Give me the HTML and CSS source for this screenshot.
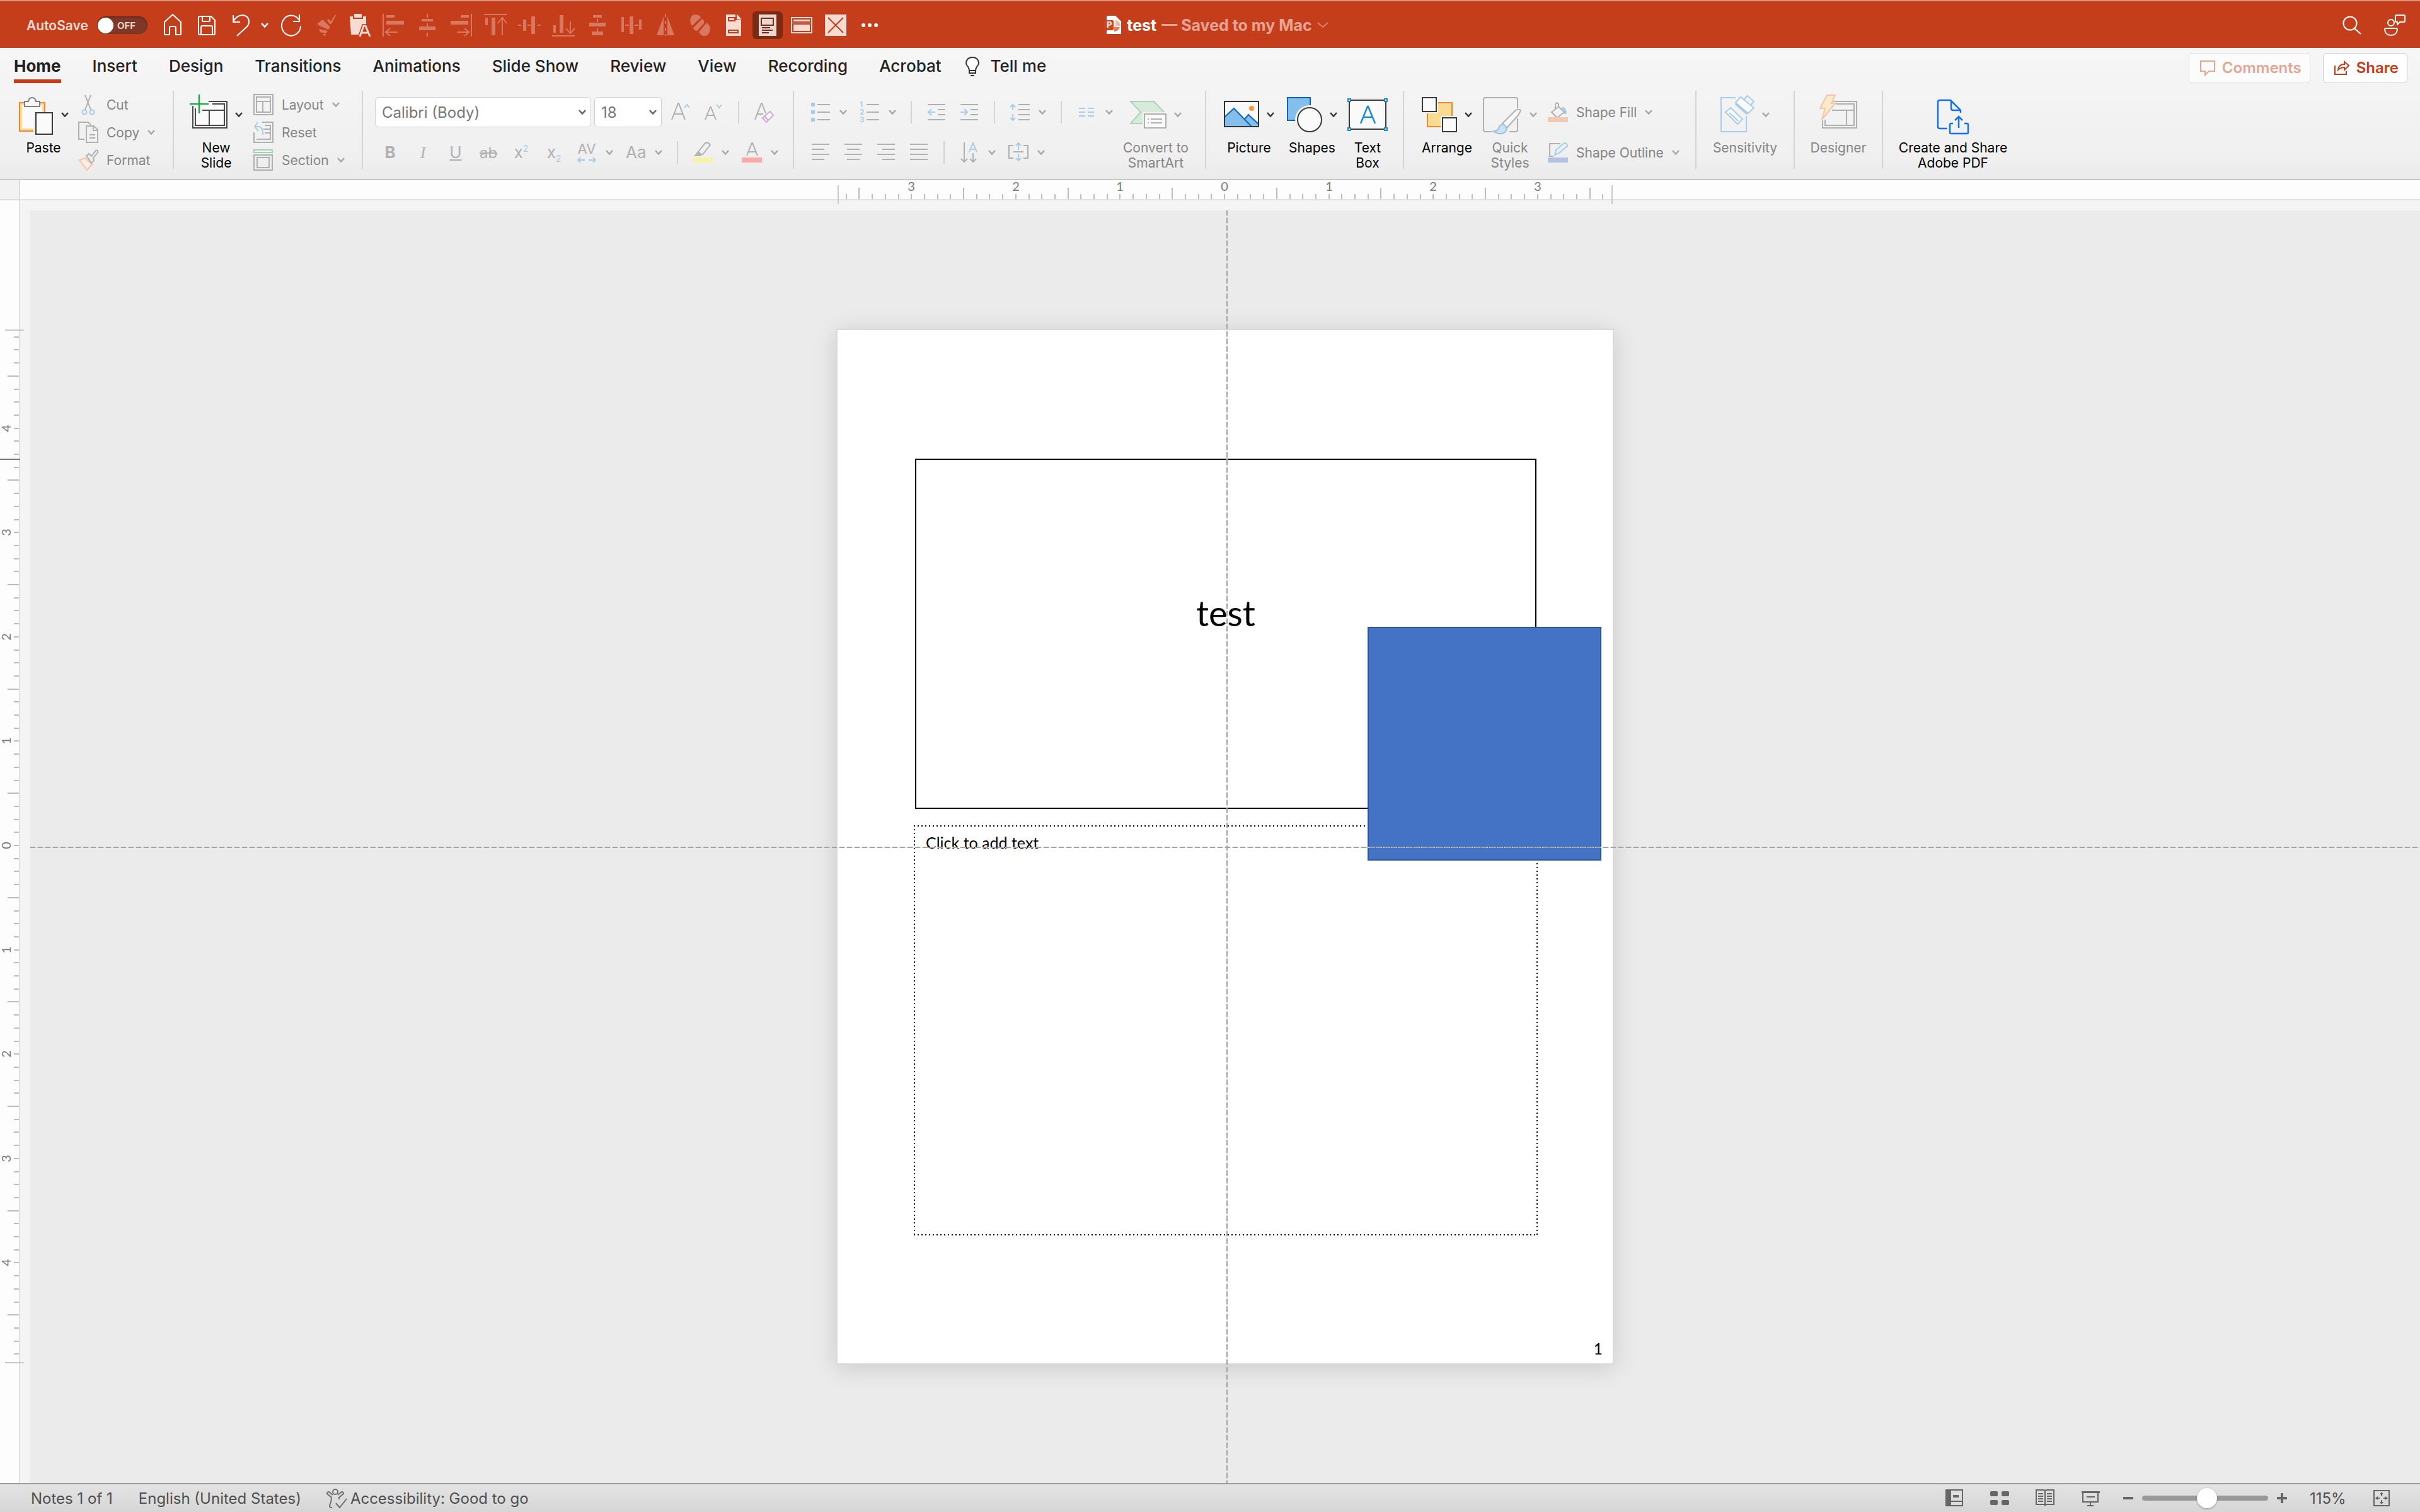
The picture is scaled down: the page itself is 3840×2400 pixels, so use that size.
FILE: index.html
```html
<!DOCTYPE html>
<html lang="en">
<head>
  <meta charset="UTF-8"/>
  <title>test</title>
  <link rel="stylesheet" href="styles.css">
</head>
<body>

<svg class="defs" aria-hidden="true">
  <symbol id="caret" viewBox="0 0 12 8"><path d="M1 1l5 5.5L11 1" fill="none" stroke="currentColor" stroke-width="2.6"/></symbol>
  <symbol id="slide-frame" viewBox="0 0 32 34"><path d="M1 1h30v32H1zM5 5h22v24H5zM5 12h22M15 12v17" fill="none" stroke="currentColor" stroke-width="2"/></symbol>
</svg>

<header class="titlebar">
  <div class="quick">
    <label class="autosave">AutoSave
      <input type="checkbox">
      <span class="toggle">OFF</span>
    </label>
    <button aria-label="Home"><svg class="q" viewBox="0 0 36 44"><path d="M5 36V17L18 5l13 12v19q0 1-1 1h-7V26q0-2-2-2h-6q-2 0-2 2v11H6q-1 0-1-1z"/></svg></button>
    <button aria-label="Save"><svg class="q" viewBox="0 0 36 44"><path d="M7 8h18l6 6v21q0 2-2 2H7q-2 0-2-2V10q0-2 2-2zM11 8v6q0 2 2 2h8q2 0 2-2V8M9 37V25q0-2 2-2h14q2 0 2 2v12"/></svg></button>
    <button aria-label="Undo"><svg class="q" viewBox="0 0 36 44"><path d="M6 6v11h11M6 16Q12 6 21 6q10 1 10 11 0 5-5 9L12 39"/></svg></button>
    <button class="drop" aria-label="Undo list"><svg class="caret"><use href="#caret"/></svg></button>
    <button aria-label="Redo"><svg class="q" viewBox="0 0 36 44"><path d="M31 5v11H21M30 13A15 16 0 1 0 33 23"/></svg></button>
    <button class="faint" aria-label="Format painter"><svg class="q solid" viewBox="0 0 36 44"><path d="M5 20l9-7 12 12-3 4-14-6zM8 28l14 3-3 4-9-2zM14 36h5l-1 4zM21 14l2-2 4 4 7-11 1 1-6 12-3 3z"/></svg></button>
    <button aria-label="Paste text"><svg class="q solid soft" viewBox="0 0 36 44"><path d="M3 8h5v4h16V8h5v14h-4L17 37H5zM10 4h12v6H10z"/><path d="M19 40l6-17h3l7 17M22 34h9" fill="none" stroke="#c43e1c" stroke-width="6"/><path d="M19 40l6-17h3l7 17M22 34h9" fill="none" stroke="#f8dcd4" stroke-width="3"/></svg></button>
    <button class="faint" aria-label="Align left"><svg class="q solid" viewBox="0 0 36 44"><path d="M1 4h2v36H1zM7 6h13v4H7zM7 15h28v6H7z"/><path d="M5 33h20M13 27l-7 6 7 6" fill="none" stroke="currentColor" stroke-width="2"/></svg></button>
    <button class="faint" aria-label="Align center"><svg class="q solid" viewBox="0 0 36 44"><path d="M17 4h2v6h-2zM9 12h18v4H9zM17 19h2v5h-2zM5 24h26v6H5zM17 34h2v6h-2z"/></svg></button>
    <button class="faint" aria-label="Align right"><svg class="q solid" viewBox="0 0 36 44"><path d="M33 4h2v36h-2zM17 6h13v4H17zM1 15h28v6H1z"/><path d="M11 33h20M23 27l7 6-7 6" fill="none" stroke="currentColor" stroke-width="2"/></svg></button>
    <button class="faint" aria-label="Align top"><svg class="q solid" viewBox="0 0 36 44"><path d="M0 4h36v2H0zM2 10h4v12H2zM12 10h6v28h-6z"/><path d="M29 38V11M22 19l7-9 7 9" fill="none" stroke="currentColor" stroke-width="2"/></svg></button>
    <button class="faint" aria-label="Align middle"><svg class="q solid" viewBox="0 0 36 44"><path d="M0 21h5v2H0zM8 13h5v18H8zM15 21h5v2h-5zM21 8h6v28h-6zM31 21h5v2h-5z"/></svg></button>
    <button class="faint" aria-label="Align bottom"><svg class="q solid" viewBox="0 0 36 44"><path d="M0 38h36v2H0zM2 22h4v12H2zM12 6h6v28h-6z"/><path d="M29 16v19M22 27l7 8 7-8" fill="none" stroke="currentColor" stroke-width="2"/></svg></button>
    <button class="faint" aria-label="Distribute vertically"><svg class="q solid" viewBox="0 0 36 44"><path d="M11 6h14v4H11zM17 12h2v5h-2zM5 18h26v6H5zM17 27h2v5h-2zM9 32h18v6H9z"/></svg></button>
    <button class="faint" aria-label="Distribute horizontally"><svg class="q solid" viewBox="0 0 36 44"><path d="M2 9h4v24H2zM8 21h6v2H8zM15 8h6v28h-6zM23 21h6v2h-6zM30 13h4v16h-4z"/></svg></button>
    <button class="faint" aria-label="Flip"><svg class="q solid" viewBox="0 0 36 44"><path d="M15 8v30H4zM21 8v30h11zM17 4h2v5h-2zM17 15h2v5h-2zM17 26h2v5h-2zM17 36h2v3h-2z"/></svg></button>
    <button class="faint" aria-label="Merge shapes"><svg class="q solid" viewBox="0 0 36 44"><path d="M3 14q1-9 9-9 5 0 8 5L6 23q-3-4-3-9zM8 26L22 12q4 2 3 7L14 31q-5 0-6-5zM17 33L29 18q6 4 6 11-2 10-9 10-6 0-9-6z"/></svg></button>
    <button aria-label="Handout master"><svg class="q solid soft" viewBox="0 0 36 44"><path d="M6 5h15v9h9v25H6zM23 4l8 9h-8z"/><path d="M10 10h10v5H10zM10 30h15v4H10z" fill="none" stroke="#c43e1c" stroke-width="2"/></svg></button>
    <button class="active" aria-label="Notes master"><svg class="q solid soft" viewBox="0 0 36 44"><path d="M4 5h28v34H4z"/><path d="M8 11h19v11H8zM9 26h13M9 30h17M9 34h11" fill="none" stroke="#7c2a14" stroke-width="2"/></svg></button>
    <button aria-label="Slide master"><svg class="q solid soft" viewBox="0 0 36 44"><path d="M1 9h34v26H1z"/><path d="M4 12h28v5H4zM4 20h28v12H4z" fill="none" stroke="#c43e1c" stroke-width="2"/></svg></button>
    <button aria-label="Close master view"><svg class="q solid soft" viewBox="0 0 36 44"><path d="M1 5h34v34H1z"/><path d="M6 10l24 24M30 10L6 34" stroke="#c43e1c" stroke-width="2"/></svg></button>
    <button aria-label="More"><svg class="q solid" viewBox="0 0 36 44"><circle cx="8" cy="22" r="3"/><circle cx="18" cy="22" r="3"/><circle cx="28" cy="22" r="3"/></svg></button>
  </div>
  <h1 class="doc-name">
    <svg width="28" height="32" viewBox="0 0 28 32"><path d="M4 1h14l9 9v20H4z" fill="#fff"/><path d="M16 10v9h9a9 9 0 0 1-9 7z" fill="#ee7a55"/><path d="M18 8a9 9 0 0 1 8 9h-8z" fill="#f6b9a2"/><rect y="8" width="15" height="16" rx="2" fill="#c9441f"/><text x="4" y="20" class="logo-p">P</text></svg>
    <span>test</span>
    <span class="saved">— Saved to my Mac</span>
    <svg class="title-caret" viewBox="0 0 18 10"><path d="M1 1l8 7 8-7" fill="none" stroke="currentColor" stroke-width="2"/></svg>
  </h1>
  <div class="title-right">
    <button aria-label="Search"><svg class="q" viewBox="0 0 36 44"><circle cx="15" cy="19" r="10.500"/><path d="M22 27l10 9"/></svg></button>
    <button aria-label="Presence"><svg class="q" viewBox="0 0 36 44"><circle cx="12" cy="18" r="5"/><path d="M4 27h16q2 0 2 2-1 9-10 9T2 29q0-2 2-2zM21 6h11q2 0 2 2v7q0 2-2 2h-6l-4 4v-4q-3 0-3-2V8q0-2 2-2z"/></svg></button>
  </div>
</header>

<div class="ribbon">
  <nav class="tabs">
    <a href="#" class="current">Home</a>
    <a href="#">Insert</a>
    <a href="#">Design</a>
    <a href="#">Transitions</a>
    <a href="#">Animations</a>
    <a href="#">Slide Show</a>
    <a href="#">Review</a>
    <a href="#">View</a>
    <a href="#">Recording</a>
    <a href="#">Acrobat</a>
    <a href="#" class="tell"><svg width="22" height="32" viewBox="0 0 22 32"><path d="M6 22q0-3-2-6-3-3-3-6 1-9 10-9t10 9q0 3-3 6-2 3-2 6zM6 22v4h10v-4" fill="#fff" stroke="#333" stroke-width="2"/><path d="M8 30h6" stroke="#333" stroke-width="2"/></svg>Tell me</a>
    <div class="tab-actions">
      <button class="pill muted"><svg width="26" height="26" viewBox="0 0 26 26"><path d="M2 2h22v16H15l-6 6v-6H2z"/></svg>Comments</button>
      <button class="pill"><svg width="26" height="26" viewBox="0 0 26 26"><path d="M2 9v14h18v-5M7 16q1-9 10-9V3l7 6-7 7v-4q-6 0-10 4z"/></svg>Share</button>
    </div>
  </nav>

  <div class="tools">
    <section class="group clipboard">
      <button class="big">
        <span class="art"><svg width="56" height="64" viewBox="0 0 56 64"><path d="M2 13h40v45H2z" fill="#f9dc91" stroke="#ed8733" stroke-width="2"/><path d="M6 17h32v37H6z" fill="#fafafa"/><path d="M10 11h6q1-6 6-6t6 6h6v8H10z" fill="#fafafa" stroke="#808080" stroke-width="2"/><path d="M24 26h4v38h-4z" fill="#f3f3f3"/><path d="M28 29h26v34H28z" fill="#fafafa" stroke="#3a3a3a" stroke-width="2"/></svg><svg class="caret"><use href="#caret"/></svg></span>
        Paste
      </button>
      <div class="stack">
        <button><svg class="s" viewBox="0 0 32 34"><path d="M11 2l9 23M20 2l-9 23" class="gr"/><circle cx="10" cy="29" r="3.500" class="bl"/><circle cx="22" cy="29" r="3.500" class="bl"/></svg>Cut</button>
        <button><svg class="s" viewBox="0 0 32 34"><path d="M10 28H1V1h15l4 4M13 7h12l6 6v20H13zM24 8v6h6M18 21h9M18 26h9" class="gr"/></svg>Copy<svg class="caret"><use href="#caret"/></svg></button>
        <button><svg class="s" viewBox="0 0 32 34"><path d="M2 17l9-3 11 10-8 9z" fill="#fbeee4" stroke="#f5c4a8" stroke-width="2"/><path d="M13 10l4-3 4 4 7-9q4-1 3 3l-7 9 1 4-4 4z" class="gr"/></svg>Format</button>
      </div>
    </section>

    <section class="group slides">
      <button class="big">
        <span class="art"><svg width="60" height="64" viewBox="0 0 60 64"><path d="M4 11h55v42H5V18" fill="#fafafa"/><path d="M30 11h29v42H5V18M36 15h19v34H9V22M20 25h35M31 25v24" fill="none" stroke="#4a4a4a" stroke-width="2"/><path d="M0 15h30M15 0v30" stroke="#1fa84d" stroke-width="2.500"/></svg><svg class="caret"><use href="#caret"/></svg></span>
        New<br>Slide
      </button>
      <div class="stack">
        <button><svg class="s" viewBox="0 0 32 34"><use href="#slide-frame" width="32" height="34"/></svg>Layout<svg class="caret"><use href="#caret"/></svg></button>
        <button><svg class="s" viewBox="0 0 32 34"><path d="M14 1h17v32H1V17M18 6h9v22H5M16 12h11M18 18h9" class="gr"/><path d="M7 1L2 8l6 7M2 8h7q7 2 6 13" class="bl"/></svg>Reset</button>
        <button><svg class="s" viewBox="0 0 32 34"><path d="M1 1h29v4H1z" fill="#fff" stroke="#9fd4ae" stroke-width="2"/><path d="M1 9h29v24H1zM6 13h19v16H6z" class="gr"/></svg>Section<svg class="caret"><use href="#caret"/></svg></button>
      </div>
    </section>

    <section class="group font">
      <div class="rows">
        <div class="row">
          <label class="pick family"><select aria-label="Font"><option>Calibri (Body)</option></select><svg class="caret"><use href="#caret"/></svg></label>
          <label class="pick size"><select aria-label="Font size"><option>18</option></select><svg class="caret"><use href="#caret"/></svg></label>
          <button aria-label="Increase font size"><svg class="s" viewBox="0 0 32 34"><path d="M2 29L12 3h1l10 26M6 20h13" class="gr"/><path d="M22 10l4-5 4 5" class="bl"/></svg></button>
          <button aria-label="Decrease font size"><svg class="s" viewBox="0 0 32 34"><path d="M3 29L11 9h1l8 20M6 22h11" class="gr"/><path d="M21 5l4 5 4-5" class="bl"/></svg></button>
          <i class="sep"></i>
          <button aria-label="Clear formatting"><svg class="s" viewBox="0 0 32 34"><path d="M2 29L12 3h1l6 16M6 20h9" class="gr"/><path d="M14 26l12-10 5 6-11 11z" fill="#fff" stroke="#d3a9d8" stroke-width="2"/><path d="M17 23l6 7" stroke="#d3a9d8" stroke-width="2"/></svg></button>
        </div>
        <div class="row letters">
          <button><b>B</b></button>
          <button><em>I</em></button>
          <button><u>U</u></button>
          <button><s>ab</s></button>
          <button>x<sup>2</sup></button>
          <button>x<sub>2</sub></button>
          <button class="spacing" aria-label="Character spacing"><span>AV</span><svg width="32" height="12" viewBox="0 0 32 12"><path d="M13 6H2M6 2L2 6l4 4M19 6h11M26 2l4 4-4 4" class="bl"/></svg></button>
          <svg class="caret"><use href="#caret"/></svg>
          <button>Aa</button>
          <svg class="caret"><use href="#caret"/></svg>
          <i class="sep"></i>
          <button aria-label="Highlight color"><svg class="s" viewBox="0 0 32 34"><path d="M8 17L20 2q5-2 8 3L16 20l-8 1z" class="gr"/><path d="M2 23l7-9 7 7-5 2z" fill="#b5b5b5"/><path d="M0 25h32v8H0z" fill="#f5f3a8"/></svg></button>
          <svg class="caret"><use href="#caret"/></svg>
          <button aria-label="Font color"><svg class="s" viewBox="0 0 32 34"><path d="M8 22L16 2h1l8 20M11 16h11" class="gr"/><path d="M0 25h32v8H0z" fill="#f9a9a6"/></svg></button>
          <svg class="caret"><use href="#caret"/></svg>
        </div>
      </div>
    </section>

    <section class="group paragraph">
      <div class="rows">
        <div class="row">
          <button aria-label="Bullets"><svg class="s" viewBox="0 0 32 34"><path d="M1 2h6v6H1zM1 14h6v6H1zM1 26h6v6H1z" fill="#a9cde8"/><path d="M11 5h20M11 17h20M11 29h20" class="gr"/></svg></button>
          <svg class="caret"><use href="#caret"/></svg>
          <button aria-label="Numbering"><svg class="s" viewBox="0 0 32 34"><text x="0" y="9" class="num">1</text><text x="0" y="21" class="num">2</text><text x="0" y="33" class="num">3</text><path d="M11 5h20M11 17h20M11 29h20" class="gr"/></svg></button>
          <svg class="caret"><use href="#caret"/></svg>
          <i class="sep"></i>
          <button aria-label="Decrease indent"><svg class="s" viewBox="0 0 32 34"><path d="M2 5h28M18 13h12M18 21h12M2 29h28" class="gr"/><path d="M14 17H3M8 12l-5 5 5 5" class="bl"/></svg></button>
          <button aria-label="Increase indent"><svg class="s" viewBox="0 0 32 34"><path d="M2 5h28M18 13h12M18 21h12M2 29h28" class="gr"/><path d="M2 17h11M8 12l5 5-5 5" class="bl"/></svg></button>
          <i class="sep"></i>
          <button aria-label="Line spacing"><svg class="s" viewBox="0 0 32 34"><path d="M14 5h18M14 13h18M14 21h18M14 29h18" class="gr"/><path d="M5 14V5M1 9l4-4 4 4M5 20v10M1 26l4 4 4-4" class="bl"/></svg></button>
          <svg class="caret"><use href="#caret"/></svg>
          <i class="sep"></i>
          <button aria-label="Columns"><svg class="s" viewBox="0 0 32 34"><path d="M4 11h10M4 17h10M4 23h10M18 11h10M18 17h10M18 23h10" class="bl"/></svg></button>
          <svg class="caret"><use href="#caret"/></svg>
        </div>
        <div class="row">
          <button aria-label="Align text left"><svg class="s" viewBox="0 0 32 34"><path d="M2 4h28M2 12h20M2 20h28M2 28h20" class="gr"/></svg></button>
          <button aria-label="Center text"><svg class="s" viewBox="0 0 32 34"><path d="M2 4h28M6 12h20M2 20h28M6 28h20" class="gr"/></svg></button>
          <button aria-label="Align text right"><svg class="s" viewBox="0 0 32 34"><path d="M2 4h28M10 12h20M2 20h28M10 28h20" class="gr"/></svg></button>
          <button aria-label="Justify"><svg class="s" viewBox="0 0 32 34"><path d="M2 4h28M2 12h28M2 20h28M2 28h28" class="gr"/></svg></button>
          <i class="sep"></i>
          <button aria-label="Text direction"><svg class="s" viewBox="0 0 32 34"><path d="M8 1v31M3 27l5 5 5-5M22 18v14M17 27l5 5 5-5" class="gr"/><path d="M16 16l6-14 6 14M18 12h8" class="bl"/></svg></button>
          <svg class="caret"><use href="#caret"/></svg>
          <button aria-label="Align text"><svg class="s" viewBox="0 0 32 34"><path d="M8 6H1v20h7M24 6h7v20h-7M8 16h16" class="gr"/><path d="M16 13V2M12 6l4-4 4 4M16 19v11M12 26l4 4 4-4" class="bl"/></svg></button>
          <svg class="caret"><use href="#caret"/></svg>
        </div>
      </div>
      <button class="big dim">
        <span class="art"><svg width="58" height="64" viewBox="0 0 58 64"><path d="M1 11h37l16 17-16 18H1l16-18z" fill="#d6ebda" stroke="#add3b8" stroke-width="2"/><path d="M20 28h38v36H20z" fill="#f2f2f2"/><path d="M23 31h34v22H23z" fill="#fafafa" stroke="#b0b0b0" stroke-width="2"/><path d="M28 39h2M28 45h2M33 39h18M33 45h18" stroke="#b0b0b0" stroke-width="2"/></svg><svg class="caret"><use href="#caret"/></svg></span>
        Convert to<br>SmartArt
      </button>
    </section>

    <section class="group insert">
      <button class="big">
        <span class="art"><svg width="56" height="64" viewBox="0 0 56 64"><path d="M1 11h54v40H1z" fill="#fafafa"/><path d="M1 36l15-14 17 17 6-7 16 15v4H1z" fill="#83beec"/><path d="M1 36l15-14 28 29M33 39l6-7 16 15" fill="none" stroke="#0f68b5" stroke-width="2"/><circle cx="44" cy="22" r="4" fill="#ff9436"/><path d="M1 11h54v40H1z" fill="none" stroke="#333" stroke-width="2"/></svg><svg class="caret"><use href="#caret"/></svg></span>
        Picture
      </button>
      <button class="big">
        <span class="art"><svg width="56" height="64" viewBox="0 0 56 64"><path d="M1 5h36v36H1z" fill="#83beec" stroke="#0f68b5" stroke-width="2"/><circle cx="36" cy="40" r="23" fill="#f2f2f2"/><circle cx="36" cy="40" r="19" fill="#fafafa" stroke="#3a3a3a" stroke-width="2"/></svg><svg class="caret"><use href="#caret"/></svg></span>
        Shapes
      </button>
      <button class="big narrow">
        <span class="art"><svg width="64" height="64" viewBox="0 0 64 64"><path d="M3 9h58v46H3z" fill="#fafafa" stroke="#3a3a3a" stroke-width="2"/><path d="M21 46l11-27h1l11 27M25 36h15" fill="none" stroke="#1e88d2" stroke-width="2.500"/><path d="M1 7h4v4H1zM59 7h4v4h-4zM1 53h4v4H1zM59 53h4v4h-4z" fill="#fff" stroke="#1e88d2" stroke-width="2"/></svg></span>
        Text<br>Box
      </button>
    </section>

    <section class="group drawing">
      <button class="big">
        <span class="art"><svg width="56" height="64" viewBox="0 0 56 64"><path d="M9 13h39v38H9z" fill="#f9dc91" stroke="#ed8733" stroke-width="2"/><path d="M0 3h26v27H0zM30 34h26v27H30z" fill="#f2f2f2"/><path d="M1 5h22v22H1zM33 37h22v22H33z" fill="#fafafa" stroke="#3a3a3a" stroke-width="2"/></svg><svg class="caret"><use href="#caret"/></svg></span>
        Arrange
      </button>
      <button class="big dim">
        <span class="art"><svg width="62" height="64" viewBox="0 0 62 64"><path d="M15 59H4q-3 0-3-3V8q0-3 3-3h48q3 0 3 3v14M55 38v18q0 3-3 3H42" class="gr"/><path d="M31 46l20-20q5-4 9-1-2 6-5 9L38 53z" fill="#fafafa" stroke="#b0b0b0" stroke-width="2"/><path d="M16 58q8 1 10-7 4-6 9-2 5 5 1 10-8 7-20-1z" fill="#cbe0f2" stroke="#9dbfe0" stroke-width="2"/></svg><svg class="caret"><use href="#caret"/></svg></span>
        Quick<br>Styles
      </button>
      <div class="rows">
        <div class="stack wide">
          <button><svg class="s" viewBox="0 0 32 34"><path d="M16 9L6 17l9 9 11-9-9-9V4q-4-4-5 1v8" class="gr"/><path d="M23 10q6 3 5 10" stroke="#a9cde8" stroke-width="4" fill="none"/><path d="M0 25h32v8H0z" fill="#f2c9b1"/></svg>Shape Fill<svg class="caret"><use href="#caret"/></svg></button>
          <button><svg class="s" viewBox="0 0 32 34"><path d="M20 3H3v20h6" class="gr"/><path d="M11 21l2-8L26 2q5 0 5 5L18 18z" fill="#e6f1fa" stroke="#a9cde8" stroke-width="2"/><path d="M0 25h32v8H0z" fill="#b3c4e2"/></svg>Shape Outline<svg class="caret"><use href="#caret"/></svg></button>
        </div>
      </div>
    </section>

    <section class="group sensitivity">
      <button class="big dim">
        <span class="art"><svg width="54" height="64" viewBox="0 0 54 64"><path d="M24 5H1v54h40V34" fill="none" stroke="#a9cde8" stroke-width="2"/><path d="M8 28l8-7 19 18-8 8zM14 29l14 13" fill="#fafafa" stroke="#a9cde8" stroke-width="2"/><path d="M24 13l8-9 21 17-9 9z" fill="#fafafa" stroke="#a9cde8" stroke-width="2"/><path d="M24 13l20 17-3 2-18-16z" fill="#a9cde8"/><path d="M37 8l6-6 10 9-5 6" fill="none" stroke="#a9cde8" stroke-width="2"/></svg><svg class="caret"><use href="#caret"/></svg></span>
        Sensitivity
      </button>
    </section>

    <section class="group designer">
      <button class="big dim">
        <span class="art"><svg width="60" height="64" viewBox="0 0 60 64"><path d="M22 11h37v42H5V41M26 15h29v34H9V40M20 25h35M43 25v24" class="gr"/><path d="M12 1h13l-6 13h6L4 40l5-18H1z" fill="#f8ecc8" stroke="#f5c4a8" stroke-width="2"/></svg></span>
        Designer
      </button>
    </section>

    <section class="group acrobat">
      <button class="big">
        <span class="art"><svg width="50" height="64" viewBox="0 0 50 64"><path d="M16 54H4q-3 0-3-3V12q0-3 3-3h17l16 16v4M22 9v13q0 3 3 3h12M25 46h-3q-2 0-2 2v12q0 2 2 2h25q2 0 2-2V48q0-2-2-2h-4M34 53V35M28 41l6-6 6 6" fill="none" stroke="#1473e6" stroke-width="2.500"/></svg></span>
        Create and Share<br>Adobe PDF
      </button>
    </section>
  </div>
</div>

<main class="workspace">
  <div class="corner"></div>
  <div class="ruler-x"><svg id="rulerX" width="1232" height="40"></svg></div>
  <div class="ruler-y"><svg id="rulerY" width="40" height="1640"></svg></div>
  <div class="canvas">
    <div class="page">
      <div class="slide-image">test</div>
      <div class="notes-body">Click to add text</div>
      <div class="square"></div>
      <div class="page-number">1</div>
    </div>
    <div class="guide-v"></div>
    <div class="guide-h"></div>
  </div>
</main>

<footer class="status">
  <span>Notes 1 of 1</span>
  <button class="lang">English (United States)</button>
  <button class="access"><svg width="34" height="34" viewBox="0 0 34 34"><circle cx="14" cy="7" r="4"/><path d="M10 12L4 7Q1 7 1 10l7 6q0 6-3 13 0 3 4 3M18 12l6-5q3 0 3 3l-7 6v3M15 25l6 7L32 18"/></svg>Accessibility: Good to go</button>
  <div class="views">
    <button aria-label="Normal view"><svg class="v" viewBox="0 0 32 32"><path d="M3 3h26v25H3zM10 3v25M10 21h19" fill="none" stroke="#666" stroke-width="2"/><path d="M3 3h7v25H3zM14 11h9v4h-9z"/></svg></button>
    <button aria-label="Slide sorter"><svg class="v" viewBox="0 0 32 32"><rect x="1" y="5" width="12" height="8" rx="2"/><rect x="19" y="5" width="12" height="8" rx="2"/><rect x="1" y="19" width="12" height="8" rx="2"/><rect x="19" y="19" width="12" height="8" rx="2"/></svg></button>
    <button aria-label="Reading view"><svg class="v" viewBox="0 0 32 32"><path d="M2 3h11q3 0 3 3 0-3 3-3h11v23H19q-3 0-3 2 0-2-3-2H2zM16 5v22M5 9h8M5 13h8M5 17h8M5 21h8M19 9h8M19 13h8M19 17h8M19 21h8" fill="none" stroke="#666" stroke-width="2"/></svg></button>
    <button aria-label="Slide show"><svg class="v" viewBox="0 0 32 32"><path d="M2 5h29v3H2z"/><path d="M4 8v14h24V8M16 22v6M11 28h10M10 14h13" fill="none" stroke="#666" stroke-width="2"/></svg></button>
  </div>
  <div class="zoom">
    <button aria-label="Zoom out"><svg width="16" height="16" viewBox="0 0 16 16"><path d="M0 6h16v4H0z"/></svg></button>
    <input type="range" min="0" max="100" value="52" aria-label="Zoom">
    <button aria-label="Zoom in"><svg width="16" height="16" viewBox="0 0 16 16"><path d="M0 6h6V0h4v6h6v4h-6v6H6v-6H0z"/></svg></button>
  </div>
  <button class="percent">115%</button>
  <button aria-label="Fit to window"><svg width="28" height="28" viewBox="0 0 28 28"><path d="M2 2h24v24H2z" fill="none" stroke="#666" stroke-width="2"/><path d="M14 4l3 4h-2v3h-2V8h-2zM14 24l3-4h-2v-3h-2v3h-2zM4 14l4-3v2h3v2H8v2zM24 14l-4-3v2h-3v2h3v2z"/></svg></button>
</footer>

<script>
document.addEventListener('DOMContentLoaded', () => {
  const step = 20.7; // eighth of an inch at 115%

  function line(x1, y1, x2, y2, cls) {
    return `<line x1="${x1}" y1="${y1}" x2="${x2}" y2="${y2}" class="${cls || 'tick'}"/>`;
  }

  let h = line(2, 8, 2, 38, 'end') + line(1230, 8, 1230, 38, 'end');
  for (let i = -29; i <= 29; i++) {
    const x = Math.round(615 + i * step);
    const half = i % 8 !== 0 && i % 4 === 0;
    h += line(x, half ? 12 : 22, x, 30);
    if (i % 8 === 0) h += `<text x="${x}" y="17">${Math.abs(i / 8)}</text>`;
  }
  document.getElementById('rulerX').innerHTML = h;

  let v = line(8, 0, 38, 0, 'end') + line(8, 1639, 38, 1639, 'end') + line(0, 205, 32, 205, 'marker');
  for (let i = -39; i <= 39; i++) {
    const y = Math.round(818 + i * step);
    const half = i % 8 !== 0 && i % 4 === 0;
    v += line(half ? 12 : 22, y, 30, y);
    if (i % 8 === 0) v += `<text transform="translate(17 ${y}) rotate(-90)">${Math.abs(i / 8)}</text>`;
  }
  document.getElementById('rulerY').innerHTML = v;
});
</script>

</body>
</html>
```
FILE: styles.css
```css
* { box-sizing: border-box; }
body {
  margin: 0; height: 100vh; overflow: hidden;
  display: flex; flex-direction: column;
  font-family: Inter, "Liberation Sans", sans-serif;
  font-size: 21px; color: #000; background: #ebebeb;
}
button {
  font: inherit; color: inherit; background: none;
  border: 0; padding: 0; margin: 0;
}
a { color: inherit; text-decoration: none; }
svg { display: block; flex: none; overflow: visible; }
.defs { position: absolute; width: 0; height: 0; }
.caret { width: 12px; height: 8px; color: #a8a8a8; }

/* title bar */
.titlebar {
  height: 76px; flex: none; background: #c43e1c; color: #fff;
  border-top: 2px solid #e0937f; padding: 2px 22px 0 42px;
  display: grid; grid-template-columns: 1fr auto 1fr; align-items: center;
}
.quick { display: flex; align-items: center; gap: 18px; width: 0; }
.q { width: 36px; height: 44px; fill: none; stroke: currentColor; stroke-width: 2; }
.q.solid { fill: currentColor; stroke: none; }
.soft { color: #f8dcd4; }
.faint { color: #d9775f; }
.drop { margin-left: -4px; }
.drop .caret { color: #fff; }
.active { background: #7c2a14; border-radius: 6px; padding: 0 6px; margin: 0 -6px; }
.active .soft { color: #e9d8d2; }
.autosave {
  display: flex; align-items: center; justify-content: space-between;
  width: 192px; flex: none; margin-right: 4px; font-weight: 600; color: #f8dcd4;
}
.autosave input { position: absolute; opacity: 0; }
.toggle {
  width: 80px; height: 28px; border-radius: 14px; background: #7f3727;
  display: flex; align-items: center; gap: 6px; font-size: 15px; font-weight: 600;
  box-shadow: inset 0 1px 3px rgba(0,0,0,0.4);
}
.toggle::before {
  content: ""; width: 25px; height: 25px; border-radius: 50%;
  background: #fff; margin-left: 1px;
}
.doc-name {
  margin: 0; display: flex; align-items: center; gap: 8px;
  font-size: 25px; font-weight: 700; white-space: nowrap;
}
.saved { color: #e6a494; }
.logo-p { font-size: 13px; font-weight: 700; fill: #fff; }
.title-caret { width: 18px; height: 10px; color: #da7f69; }
.title-right { display: flex; justify-content: flex-end; gap: 32px; }

/* ribbon */
.ribbon {
  height: 210px; flex: none; border-bottom: 2px solid #c8c8c8;
  background: linear-gradient(#f6f6f6, #f0f0f0 80%, #ebebeb);
}
.tabs {
  height: 68px; display: flex; align-items: flex-start; gap: 50px;
  padding: 14px 20px 0 22px; font-size: 26px; line-height: 30px;
  font-weight: 500; color: #222;
}
.tabs a { white-space: nowrap; }
.current { font-weight: 700; border-bottom: 6px solid #c43e1c; height: 42px; }
.tell { display: flex; gap: 18px; margin-left: -12px; }
.tab-actions { display: flex; gap: 20px; margin: -6px 0 0 auto; }
.pill {
  height: 48px; padding: 0 13px 0 16px; display: flex; align-items: center; gap: 10px;
  background: #fff; border: 1px solid #c9c9c9; border-radius: 6px;
  font-size: 24px; font-weight: 600; color: #c43e1c;
}
.pill svg { fill: none; stroke: currentColor; stroke-width: 2; }
.pill.muted { color: #e6a494; border-color: #dcdcdc; background: #fcfcfc; }

.tools { display: flex; height: 124px; }
.group { display: flex; border-right: 2px solid #d4d4d4; }
.clipboard { width: 276px; padding-left: 14px; }
.slides { width: 300px; padding-left: 8px; }
.font { width: 684px; padding-left: 19px; }
.paragraph { width: 654px; padding-left: 26px; }
.insert { width: 314px; padding-left: 18px; }
.drawing { width: 464px; padding-left: 18px; }
.sensitivity { width: 156px; justify-content: center; }
.designer { width: 140px; justify-content: center; }
.acrobat { width: 222px; justify-content: center; border-right: 0; }

.big {
  width: 100px; padding-top: 6px; display: block;
  line-height: 24px; text-align: center; white-space: nowrap;
  align-self: flex-start;
}
.big.narrow { width: 76px; }
.clipboard .big { width: 110px; }
.slides .big { width: 118px; }
.paragraph .big { width: 108px; }
.sensitivity .big, .designer .big { width: 120px; }
.acrobat .big { width: 200px; }
.art { height: 64px; margin-bottom: 9px; display: flex; align-items: center; justify-content: center; gap: 12px; }
.big .caret { color: #3a3a3a; }
.dim { color: #858585; }
.big.dim .caret { color: #a8a8a8; }

.stack { display: flex; flex-direction: column; color: #858585; }
.stack button { height: 44px; flex: none; display: flex; align-items: center; gap: 13px; white-space: nowrap; }
.stack.wide { gap: 20px; padding-left: 10px; }
.s { width: 32px; height: 34px; }
.stack .s { color: #b0b0b0; }
.gr { fill: none; stroke: #b0b0b0; stroke-width: 2; }
.bl { fill: none; stroke: #a9cde8; stroke-width: 2; }
.num { font-size: 12px; font-weight: 600; fill: #a9cde8; }

.rows { display: flex; flex-direction: column; gap: 16px; padding-top: 10px; }
.paragraph .rows { width: 494px; }
.drawing .rows { padding-top: 12px; }
.row { height: 48px; display: flex; align-items: center; gap: 20px; }
.row > .caret { margin-left: -6px; }
.sep { width: 2px; height: 36px; background: #d4d4d4; margin: 0 3px; }
.pick { position: relative; }
.pick select {
  appearance: none; width: 100%; height: 48px; padding: 0 10px;
  font: inherit; font-size: 24px; color: #777;
  background: #fff; border: 1px solid #cfcfcf; border-radius: 6px;
}
.pick .caret { position: absolute; right: 8px; top: 20px; color: #666; }
.family { width: 343px; margin-right: -15px; }
.size { width: 107px; margin-right: -6px; }
.letters { padding-left: 8px; color: #b0b0b0; font-size: 26px; }
.letters button { width: 32px; height: 40px; line-height: 40px; text-align: center; white-space: nowrap; }
.letters em { font-family: "Liberation Serif", serif; }
.letters s { font-size: 24px; }
.letters sup, .letters sub { font-size: 14px; line-height: 0; color: #a9cde8; }
.letters .spacing { line-height: 24px; font-size: 22px; }
.spacing span { display: block; }

/* rulers and canvas */
.workspace { flex: 1; min-height: 0; display: grid; grid-template: 32px 1fr / 32px 1fr; }
.corner { background: #f2f2f2; border: solid #dcdcdc; border-width: 0 2px 2px 0; }
.ruler-x, .ruler-y { background: #fdfdfd; z-index: 1; display: flex; }
.ruler-x { border-bottom: 2px solid #e0e0e0; padding-left: 16px; justify-content: center; }
.ruler-y { border-right: 2px solid #e0e0e0; padding-top: 16px; align-items: center; min-height: 0; }
.tick { stroke: #bcbcbc; stroke-width: 2; }
.end { stroke: #cacaca; stroke-width: 2; }
.marker { stroke: #777; stroke-width: 2; }
.ruler-x text, .ruler-y text { font: 20px Lato, sans-serif; fill: #7a7a7a; text-anchor: middle; }
.canvas {
  position: relative; min-height: 0; background: #ebebeb;
  border: solid #f4f4f4; border-width: 16px 0 0 16px;
  display: flex; align-items: center; justify-content: center;
}
.page {
  position: relative; flex: none; width: 1234px; height: 1644px;
  background: #fff; border: 2px solid #dadada;
  box-shadow: 0 6px 36px rgba(0,0,0,0.14);
  font-family: Lato, sans-serif;
}
.slide-image {
  position: absolute; left: 123px; top: 204px; width: 986px; height: 556px;
  border: 2px solid #000; padding-bottom: 68px;
  display: flex; align-items: center; justify-content: center; font-size: 56px;
}
.notes-body {
  position: absolute; left: 121px; top: 786px; width: 990px; height: 651px;
  padding: 13px 19px; font-size: 25px; line-height: 28px;
  background:
    repeating-linear-gradient(90deg, #000 0 2px, transparent 2px 6px) top / 100% 2px no-repeat,
    repeating-linear-gradient(90deg, #000 0 2px, transparent 2px 6px) bottom / 100% 2px no-repeat,
    repeating-linear-gradient(#000 0 2px, transparent 2px 6px) left / 2px 100% no-repeat,
    repeating-linear-gradient(#000 0 2px, transparent 2px 6px) right / 2px 100% no-repeat;
}
.square {
  position: absolute; left: 841px; top: 471px; width: 371px; height: 371px;
  background: #4472c4; border: 2px solid #2f5597;
}
.page-number { position: absolute; right: 16px; bottom: 10px; font-size: 25px; line-height: 28px; }
.guide-v, .guide-h { position: absolute; }
.guide-v {
  left: calc(50% + 2px); top: 0; bottom: 0; width: 2px;
  background: repeating-linear-gradient(#a3a3a3 0 8px, #eccfc8 8px 9px, transparent 9px 11px, #eccfc8 11px 12px);
}
.guide-h {
  top: 50%; left: 0; right: 0; height: 2px;
  background: repeating-linear-gradient(90deg, #a3a3a3 0 8px, #eccfc8 8px 9px, transparent 9px 11px, #eccfc8 11px 12px);
}

/* status bar */
.status {
  height: 46px; flex: none; border-top: 2px solid #9d9d9d;
  background: linear-gradient(#e3e3e3, #d6d6d6);
  display: flex; align-items: center; padding: 0 47px 0 49px;
  font-size: 24px; color: #4f4f4f; white-space: nowrap;
}
.status svg { fill: #666; }
.lang { margin-left: 41px; }
.access { display: flex; align-items: center; gap: 4px; margin-left: 40px; }
.access svg { fill: none; stroke: #707070; stroke-width: 2; }
.views { display: flex; gap: 40px; margin-left: auto; }
.v { width: 32px; height: 32px; }
.zoom { display: flex; align-items: center; gap: 14px; margin: 0 36px; }
.zoom input { appearance: none; width: 200px; height: 34px; margin: 0; background: none; }
.zoom input::-webkit-slider-runnable-track { height: 8px; border-radius: 4px; background: #999; }
.zoom input::-webkit-slider-thumb {
  appearance: none; width: 32px; height: 32px; margin-top: -12px;
  border-radius: 50%; background: #fff; box-shadow: 0 1px 3px rgba(0,0,0,0.35);
}
.percent { width: 60px; margin-right: 40px; text-align: left; }
```
